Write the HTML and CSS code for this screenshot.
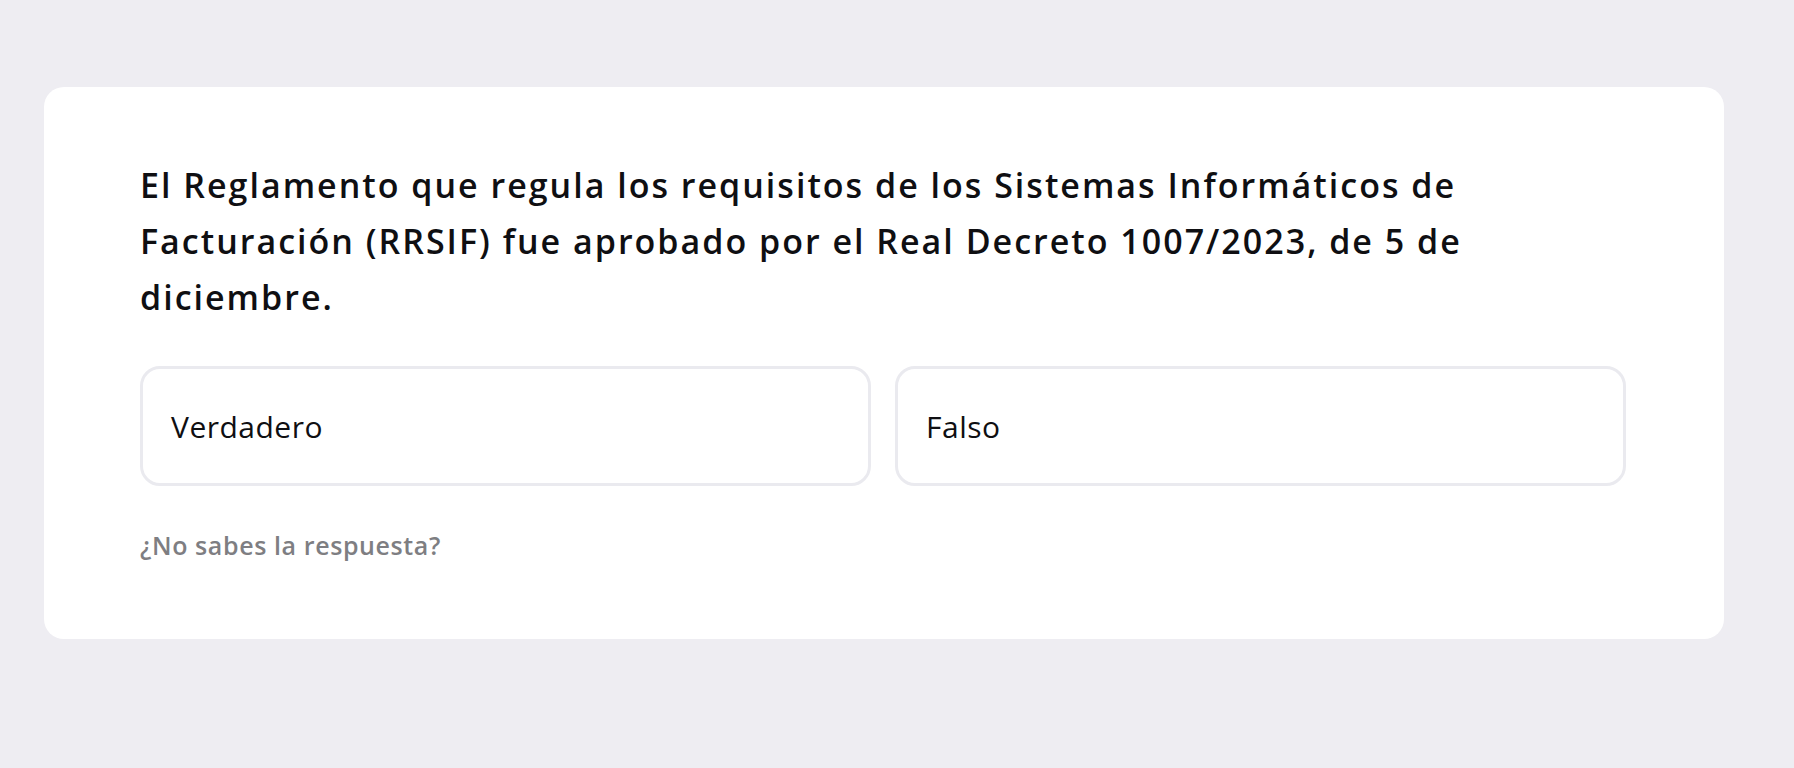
FILE: index.html
```html
<!DOCTYPE html>
<html lang="es">
<head>
<meta charset="utf-8">
<title>Pregunta</title>
<link rel="stylesheet" href="styles.css">
</head>
<body>
<main class="page">
  <section class="card">
    <h1 class="question">El Reglamento que regula los requisitos de los Sistemas Informáticos de Facturación (RRSIF) fue aprobado por el Real Decreto 1007/2023, de 5 de diciembre.</h1>
    <div class="options">
      <button class="option" type="button">Verdadero</button>
      <button class="option" type="button">Falso</button>
    </div>
    <a class="hint" href="#">¿No sabes la respuesta?</a>
  </section>
</main>
</body>
</html>
```

FILE: styles.css
```css
html, body {
  margin: 0;
  padding: 0;
}
body {
  background: #eeedf2;
  font-family: "Open Sans", "Noto Sans", sans-serif;
  color: #111114;
  height: 768px;
  overflow: hidden;
}
.page {
  padding: 87px 70px 0 44px;
}
.card {
  background: #ffffff;
  border-radius: 20px;
  padding: 70px 98px 78px 96px;
  display: flex;
  flex-direction: column;
  align-items: flex-start;
}
.question {
  margin: 0;
  font-size: 34px;
  line-height: 56px;
  font-weight: 600;
  letter-spacing: 2px;
  color: #0f0f12;
}
.options {
  margin-top: 41px;
  width: 100%;
  display: grid;
  grid-template-columns: 1fr 1fr;
  gap: 24px;
}
.option {
  height: 120px;
  border: 3px solid #eaeaef;
  border-radius: 20px;
  background: #ffffff;
  padding: 0 28px;
  display: flex;
  align-items: center;
  font-family: inherit;
  font-size: 30px;
  font-weight: 400;
  letter-spacing: 0.5px;
  color: #0f0f12;
  text-align: left;
  cursor: pointer;
}
.hint {
  margin-top: 43px;
  font-size: 25px;
  line-height: 32px;
  font-weight: 600;
  letter-spacing: 0.6px;
  color: #7e7e82;
  text-decoration: none;
}
```
